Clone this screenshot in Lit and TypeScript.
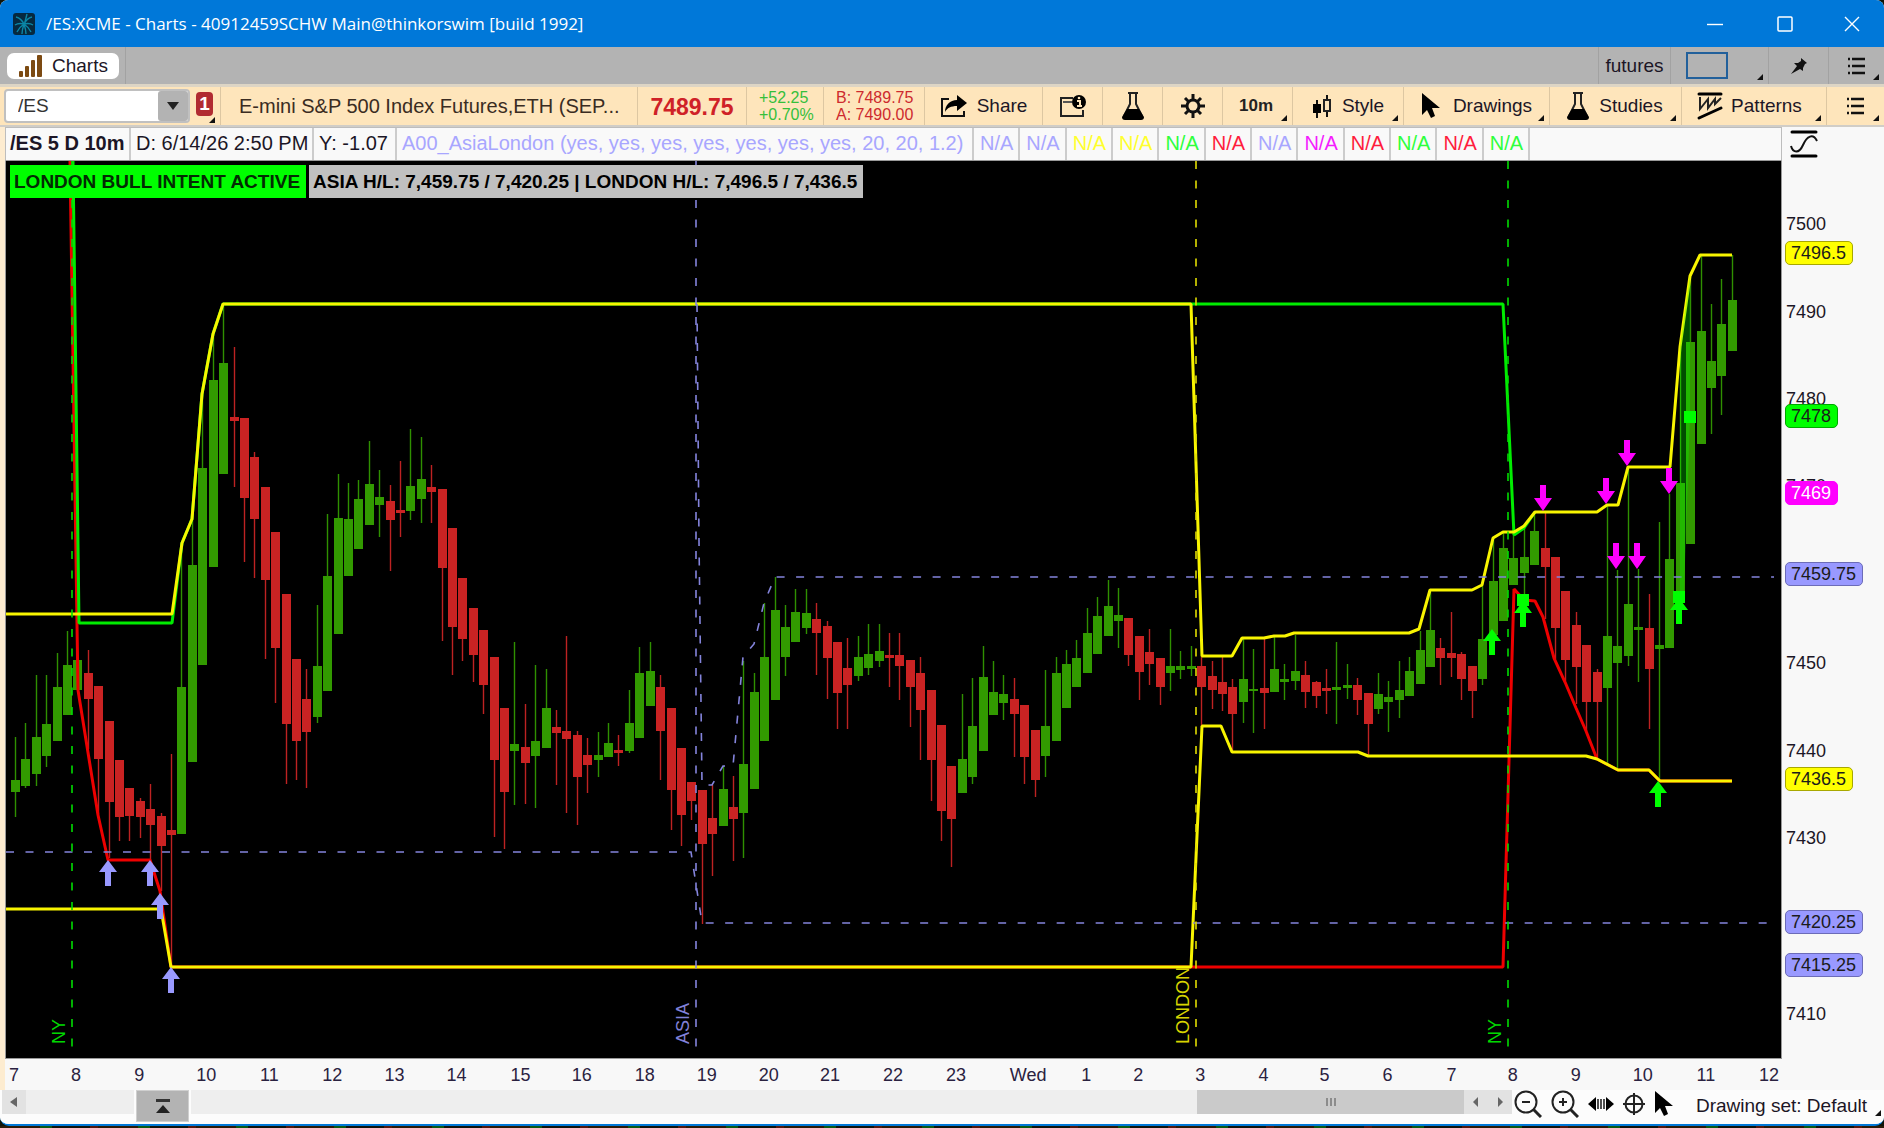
import { LitElement, html, svg, css } from "lit";
import { customElement } from "lit/decorators.js";

/* ---------- chart data (plot units) ---------- */

const PLOT = { x: 5, y: 160, w: 1775, h: 897 };
const FIRST_BAR = 14;
const BAR_STEP = 10.405;

type Bar = [string, number, number, number, number];

// direction, high, body top, body bottom, low
const BARS: Bar[] = [
  ["u", 736, 779, 791, 816], ["u", 722, 758, 785, 787], ["u", 674, 736, 773, 785], ["u", 674, 723, 755, 766],
  ["u", 652, 686, 740, 740], ["u", 630, 664, 714, 714], ["u", 659, 659, 689, 689], ["d", 649, 672, 698, 748],
  ["d", 685, 685, 758, 814], ["d", 720, 720, 801, 857], ["d", 759, 759, 816, 840], ["d", 787, 787, 815, 840],
  ["d", 797, 800, 816, 837], ["d", 783, 808, 824, 859], ["d", 812, 815, 845, 890], ["d", 753, 829, 834, 965],
  ["u", 542, 686, 833, 833], ["u", 518, 564, 761, 761], ["u", 393, 467, 664, 664], ["u", 333, 379, 566, 566],
  ["u", 303, 362, 473, 473], ["d", 346, 416, 420, 486], ["d", 417, 417, 497, 561], ["d", 451, 456, 518, 577],
  ["d", 486, 486, 579, 658], ["d", 531, 531, 647, 702], ["d", 593, 593, 723, 783], ["d", 658, 658, 740, 779],
  ["d", 668, 698, 731, 787], ["u", 604, 665, 716, 722], ["u", 513, 575, 690, 690], ["u", 473, 517, 633, 633],
  ["u", 482, 518, 575, 575], ["u", 479, 498, 548, 548], ["u", 440, 483, 524, 524], ["u", 469, 496, 504, 536],
  ["d", 484, 500, 519, 570], ["d", 460, 509, 512, 536], ["u", 428, 485, 510, 519], ["u", 436, 478, 498, 522],
  ["d", 464, 486, 491, 522], ["d", 488, 488, 567, 640], ["d", 527, 527, 626, 674], ["d", 577, 577, 638, 660],
  ["d", 607, 607, 654, 681], ["d", 629, 629, 684, 713], ["d", 656, 656, 759, 836], ["d", 707, 707, 791, 848],
  ["u", 641, 743, 750, 804], ["d", 703, 746, 762, 803], ["u", 664, 740, 755, 807], ["u", 668, 707, 747, 747],
  ["d", 709, 726, 732, 784], ["d", 635, 730, 738, 812], ["d", 730, 734, 776, 824], ["d", 737, 754, 764, 792],
  ["u", 731, 754, 759, 776], ["u", 722, 742, 756, 756], ["d", 734, 749, 752, 765], ["u", 689, 722, 750, 752],
  ["u", 646, 672, 737, 737], ["u", 641, 670, 705, 705], ["d", 674, 686, 730, 779], ["d", 707, 707, 789, 829],
  ["d", 747, 747, 814, 845], ["d", 781, 781, 800, 819], ["d", 789, 789, 843, 923], ["d", 784, 817, 833, 875],
  ["u", 765, 788, 825, 825], ["d", 775, 806, 818, 860], ["u", 660, 763, 812, 857], ["u", 672, 691, 788, 788],
  ["u", 602, 656, 740, 740], ["u", 576, 609, 699, 699], ["u", 604, 626, 656, 675], ["u", 588, 611, 641, 641],
  ["u", 588, 612, 627, 633], ["d", 602, 618, 632, 674], ["d", 620, 625, 657, 698], ["d", 641, 641, 692, 728],
  ["d", 637, 667, 684, 728], ["u", 635, 656, 675, 680], ["u", 623, 653, 667, 674], ["u", 623, 650, 660, 666],
  ["d", 632, 654, 657, 686], ["d", 632, 654, 665, 699], ["d", 659, 659, 686, 726], ["d", 656, 672, 709, 759],
  ["d", 689, 689, 759, 800], ["d", 724, 724, 810, 840], ["d", 765, 765, 818, 866], ["u", 693, 758, 792, 792],
  ["u", 677, 725, 776, 783], ["u", 645, 676, 750, 750], ["u", 660, 691, 714, 714], ["u", 674, 693, 702, 719],
  ["d", 677, 698, 713, 756], ["d", 704, 704, 756, 783], ["d", 729, 729, 779, 796], ["u", 669, 725, 755, 776],
  ["u", 656, 672, 740, 740], ["u", 649, 663, 707, 707], ["u", 639, 657, 686, 686], ["u", 607, 632, 672, 672],
  ["u", 596, 615, 653, 653], ["u", 579, 605, 635, 635], ["u", 587, 614, 620, 647], ["d", 617, 617, 654, 665],
  ["d", 635, 635, 671, 699], ["d", 628, 651, 663, 684], ["d", 657, 657, 686, 704], ["u", 628, 665, 672, 690],
  ["u", 650, 665, 669, 678], ["u", 645, 665, 668, 675], ["d", 655, 665, 686, 726], ["d", 660, 675, 689, 708],
  ["d", 656, 681, 693, 710], ["d", 678, 686, 713, 750], ["u", 638, 678, 701, 722], ["u", 648, 688, 690, 732],
  ["d", 638, 687, 692, 728], ["u", 636, 668, 691, 691], ["u", 663, 678, 681, 699], ["u", 634, 670, 680, 689],
  ["d", 660, 674, 691, 707], ["d", 680, 681, 695, 707], ["d", 668, 687, 690, 713], ["u", 641, 686, 689, 723],
  ["u", 663, 684, 687, 698], ["d", 677, 684, 699, 714], ["d", 692, 692, 723, 755], ["u", 672, 693, 708, 713],
  ["u", 680, 696, 701, 731], ["u", 660, 689, 699, 717], ["u", 656, 670, 695, 695], ["u", 630, 649, 683, 683],
  ["u", 591, 629, 666, 666], ["d", 637, 647, 657, 684], ["d", 611, 652, 657, 676], ["d", 651, 653, 678, 699],
  ["d", 665, 665, 690, 717], ["u", 583, 638, 678, 684], ["u", 537, 580, 634, 634], ["u", 530, 547, 620, 620],
  ["u", 533, 557, 584, 584], ["u", 525, 556, 572, 594], ["u", 511, 530, 564, 564], ["d", 511, 547, 566, 618],
  ["d", 556, 556, 627, 658], ["d", 590, 590, 659, 680], ["d", 611, 624, 666, 703], ["d", 644, 644, 701, 730],
  ["d", 668, 671, 701, 758], ["u", 504, 635, 687, 763], ["u", 569, 645, 662, 768], ["u", 467, 603, 655, 665],
  ["u", 568, 626, 629, 681], ["d", 593, 627, 668, 728], ["u", 521, 644, 648, 779], ["u", 493, 558, 647, 647],
  ["u", 346, 482, 600, 600], ["u", 273, 341, 543, 543], ["u", 254, 330, 443, 443], ["u", 303, 360, 387, 433],
  ["u", 278, 323, 375, 414], ["u", 254, 299, 350, 350],
];

const CLIMB = "171,613 181,542 191,518 201,393 212,333 222,303";

const LINES = [
  { cls: "red", pts: "69,160 77,689 97,814 107,859 149,859 159,890 170,966 1502,966 1513,588 1523,599 1534,600 1542,616 1553,657 1564,681 1575,707 1585,730 1596,758 1617,769 1648,769 1659,780 1731,780" },
  { cls: "green", pts: "72,160 78,622 171,622 181,542 191,518 201,393 212,333 222,303 1502,303 1513,534 1523,527 1534,511" },
  { cls: "yellow", pts: `5,613 ${CLIMB} 1190,303 1201,655 1231,655 1241,637 1263,637 1273,635 1284,635 1293,632 1408,632 1418,628 1429,589 1471,589 1481,584 1492,537 1502,531 1513,531 1523,525 1534,511 1596,511 1606,504 1617,504 1627,466 1669,466 1679,346 1689,275 1699,254 1731,254` },
  { cls: "yellow", pts: "5,908 160,908 170,966 1190,966 1201,725 1220,725 1231,751 1357,751 1367,755 1585,755 1596,758 1617,769 1648,769 1659,780 1731,780" },
];

const DASHED = [
  { cls: "peri", pts: "5,851 690,851 701,922 1768,922" },
  { cls: "peri", pts: "696,303 698,540 701,784 711,784 722,765 732,765 742,656 753,643 763,602 774,576 1773,576" },
  { cls: "green", pts: "71,160 71,1058" },
  { cls: "peri", pts: "695,160 695,1058" },
  { cls: "yellow", pts: "1195,160 1195,1058" },
  { cls: "green", pts: "1507,160 1507,1058" },
];

const UP_MARKS: [string, number, number][] = [
  ["peri", 107, 859], ["peri", 149, 859], ["peri", 159, 892], ["peri", 170, 966],
  ["green", 1491, 628], ["green", 1522, 600], ["green", 1678, 597], ["green", 1657, 780],
];
const DOWN_MARKS: [number, number][] = [
  [1542, 510], [1605, 503], [1626, 465], [1668, 493], [1615, 568], [1636, 568],
];
const SQUARES: [number, number][] = [[1522, 599], [1678, 596], [1689, 416]];

const SESSIONS = [
  { text: "NY", cls: "green", x: 58 },
  { text: "ASIA", cls: "peri", x: 682 },
  { text: "LONDON", cls: "yellow", x: 1182 },
  { text: "NY", cls: "green", x: 1494 },
];

const HOURS: [string, number][] = [
  ["7", 14], ["8", 76], ["9", 139], ["10", 206], ["11", 269], ["12", 332], ["13", 394], ["14", 456],
  ["15", 520], ["16", 581], ["18", 644], ["19", 706], ["20", 768], ["21", 829], ["22", 892], ["23", 955],
  ["Wed", 1027], ["1", 1085], ["2", 1137], ["3", 1199], ["4", 1262], ["5", 1323], ["6", 1386], ["7", 1450],
  ["8", 1511], ["9", 1574], ["10", 1641], ["11", 1704], ["12", 1767],
];

const PRICES: [string, number][] = [
  ["7500", 223], ["7490", 311], ["7480", 398], ["7470", 485], ["7450", 661], ["7440", 749], ["7430", 836], ["7410", 1012],
];
const BUBBLES: [string, number, string][] = [
  ["7496.5", 252, "yellow"], ["7478", 415, "green"], ["7469", 492, "magenta"], ["7459.75", 573, "peri"],
  ["7436.5", 777, "yellow"], ["7420.25", 920, "peri"], ["7415.25", 963, "peri"],
];

const READINGS = ["peri", "peri", "yellow", "yellow", "green", "red", "peri", "magenta", "red", "green", "red", "green"];

const pctX = (x: number) => `${((x - PLOT.x) / PLOT.w) * 100}%`;
const pctY = (y: number) => `${((y - PLOT.y) / PLOT.h) * 100}%`;

/* ---------- icons ---------- */

const icon = (w: number, h: number, body: unknown) =>
  html`<svg class="icon" width=${w} height=${h} viewBox="0 0 ${w} ${h}" aria-hidden="true">${body}</svg>`;

const appLogo = icon(22, 22, svg`
  <rect x="0" y="0" width="22" height="22" rx="3" fill="#06293f"/>
  <g fill="none" stroke="#0b86a6" stroke-width="1.4">
    <path d="M11 11C9 7 7 5 3 4M11 11C7 10 5 10 2 12M11 11C8 13 6 15 4 19M11 11C10 14 9 17 9 21M11 11C13 7 15 5 19 4M11 11C15 10 17 10 20 12M11 11C14 13 16 15 18 19M11 11C12 14 13 17 13 21"/>
    <path d="M14 1L12 9"/>
  </g>`);

const barsIcon = icon(24, 24, svg`
  <g fill="#7c4a12"><rect x="0" y="17" width="4" height="6" rx="1"/><rect x="6" y="12" width="4" height="11" rx="1"/><rect x="12" y="6" width="4" height="17" rx="1"/><rect x="18" y="1" width="5" height="22" rx="1"/></g>`);

const shareIcon = icon(28, 24, svg`
  <path d="M9 5H2V22H24V17" fill="none" stroke="#111" stroke-width="2"/>
  <path d="M17 1L27 9L17 17V12C11 12 7 14 5 18C5 11 10 6 17 6Z" fill="#000"/>`);

const noteIcon = icon(28, 24, svg`
  <path d="M14 4H2V22H24V16" fill="none" stroke="#222" stroke-width="2"/>
  <path d="M4 8H13" stroke="#555" stroke-width="2"/>
  <circle cx="20" cy="8" r="7" fill="#000"/>
  <path d="M18 7H21V12M18 12H23" fill="none" stroke="#fee5bb" stroke-width="2"/><circle cx="20" cy="4" r="1.3" fill="#fee5bb"/>`);

const flaskIcon = icon(24, 30, svg`
  <path d="M7 2H17M9 2V13L3 25M15 2V13L21 25" fill="none" stroke="#222" stroke-width="2"/>
  <path d="M6 18H18L23 26Q23 29 20 29H4Q1 29 1 26Z" fill="#000"/>`);

const gearIcon = icon(24, 24, svg`
  <g stroke="#111" stroke-width="3"><path d="M12 0V24M0 12H24M4 4L20 20M20 4L4 20"/></g>
  <circle cx="12" cy="12" r="7.5" fill="#111"/><circle cx="12" cy="12" r="4.5" fill="#fee5bb"/>`);

const candleIcon = icon(20, 24, svg`
  <path d="M5 6V24M15 1V23" stroke="#111" stroke-width="2"/>
  <rect x="1" y="10" width="8" height="9" fill="#000"/>
  <rect x="12" y="6" width="6" height="11" fill="#fee5bb" stroke="#222" stroke-width="2"/>`);

const cursorIcon = icon(20, 26, svg`
  <path d="M1 0V22L6 17L10 25L14 23L11 15H19Z" fill="#000"/>`);

const patternIcon = icon(26, 28, svg`
  <path d="M2 2H24M2 26L24 16" stroke="#000" stroke-width="3" stroke-linecap="round"/>
  <path d="M3 5V17L11 7V16L18 7V12L24 6" fill="none" stroke="#222" stroke-width="2"/>`);

const listIcon = icon(19, 18, svg`
  <g stroke="#111" stroke-width="2.6"><path d="M5 2H18M5 9H18M5 16H18M1 2H3M1 9H3M1 16H3"/></g>`);

const pinIcon = icon(18, 18, svg`
  <path d="M11 1L17 6L15 7L13 11L13 14L10 12L1 17L7 9L4 6H8L11 4Z" fill="#111"/>`);

const scaleIcon = icon(28, 28, svg`
  <path d="M2 2H26M2 26H26" stroke="#000" stroke-width="3" stroke-linecap="round"/>
  <path d="M1 16C3 23 9 24 13 15S23 3 27 11" fill="none" stroke="#111" stroke-width="2"/>`);

const magnifier = (plus: boolean) => icon(28, 28, svg`
  <circle cx="12" cy="12" r="10.5" fill="none" stroke="#222" stroke-width="2"/>
  <path d="M19 19L27 27" stroke="#222" stroke-width="3"/>
  <path d="M8 12H16" stroke="#222" stroke-width="2"/>
  ${plus ? svg`<path d="M12 8V16" stroke="#222" stroke-width="2"/>` : ""}`);

const spreadIcon = icon(26, 16, svg`
  <path d="M0 8L8 1V15ZM26 8L18 1V15Z" fill="#000"/><path d="M10 3V13M13 3V13M16 3V13" stroke="#222" stroke-width="1.6"/>`);

const crossIcon = icon(22, 22, svg`
  <circle cx="11" cy="11" r="8.5" fill="none" stroke="#222" stroke-width="2"/><path d="M11 0V22M0 11H22" stroke="#222" stroke-width="2"/>`);

const jumpIcon = icon(16, 18, svg`<rect x="1" y="2" width="14" height="3" fill="#333"/><path d="M8 8L15 16H1Z" fill="#222"/>`);

const tri = (d: string, color = "#666") => icon(8, 10, svg`<path d=${d} fill=${color}/>`);

/* ---------- root ---------- */

@customElement("app-root")
export class AppRoot extends LitElement {
  static styles = css`
    :host {
      display: block;
      height: 100vh;
      min-height: 600px;
      background: #101408;
      font: 19px/24px "Liberation Sans", Arial, sans-serif;
      color: #1c1626;
    }
    * { box-sizing: border-box; }
    button, input {
      font: inherit; color: inherit; background: none; border: 0; padding: 0; margin: 0; border-radius: 0;
    }
    .icon { display: block; flex: none; }
    .page { height: 100%; display: flex; flex-direction: column; }
    .window {
      flex: 1; min-height: 0; display: flex; flex-direction: column; overflow: hidden;
      background: #fbfbfb; border-bottom: 2px solid #0078d7; border-radius: 8px 8px 9px 9px;
    }
    .behind { height: 2px; flex: none; background: repeating-linear-gradient(90deg, #2b1b08 0 40px, #0a5a14 40px 52px, #10140c 52px 90px, #54180e 90px 98px); }

    .title { height: 47px; flex: none; display: flex; align-items: center; background: #0078d9; color: #fff; }
    .title h1 { flex: 1; margin: 0; font: 400 17px/24px "Open Sans", "Noto Sans", sans-serif; white-space: nowrap; }
    .title .logo { padding: 0 11px 0 13px; }
    .winbtn { width: 70px; height: 47px; display: grid; place-items: center; }
    .winbtn.close { width: 64px; }

    .tabs { height: 37px; flex: none; display: flex; align-items: stretch; background: #b3b3b3; }
    .tabwrap { width: 126px; padding: 6px 7px 5px 7px; border-right: 1px solid #a2a2a2; }
    .tab { width: 112px; height: 26px; display: flex; align-items: center; gap: 9px; padding-left: 12px; background: #fff; border-radius: 7px; }
    .space { flex: 1; }
    .tcell { position: relative; border-left: 1px solid #a2a2a2; display: flex; align-items: center; justify-content: center; }
    .w56 { width: 56px; } .w60 { width: 60px; } .w72 { width: 72px; } .w98 { width: 98px; }
    .swatch { width: 42px; height: 27px; border: 2px solid #22609b; margin-right: 26px; }
    .corner::after {
      content: ""; position: absolute; right: 5px; bottom: 4px;
      border-style: solid; border-width: 0 0 6px 6px; border-color: transparent transparent #111 transparent;
    }

    .tools {
      height: 43px; flex: none; display: flex; align-items: stretch; background: #fee5bb;
      border-top: 3px solid #ddd5c5; border-bottom: 2px solid #d0cdc7; white-space: nowrap;
    }
    .symbol { width: 220px; display: flex; align-items: center; padding-left: 4px; }
    .combo { width: 186px; height: 34px; display: flex; align-items: stretch; background: #fff; border: 2px solid #c0c0c0; border-radius: 4px; }
    .combo input { flex: 1; min-width: 0; padding-left: 12px; color: #333; outline: 0; }
    .combo button { width: 30px; background: #b3b3b3; border-radius: 3px; display: grid; place-items: center; }
    .badge { position: relative; width: 17px; height: 24px; margin: 0 0 4px 6px; background: #b12b31; color: #fff; font-weight: 700; border-radius: 4px; }
    .badge::after { content: ""; position: absolute; right: -2px; bottom: -7px; border-style: solid; border-width: 0 0 6px 6px; border-color: transparent transparent #111 transparent; }
    .cell { position: relative; border-left: 1px solid #ddc7a2; display: flex; align-items: center; justify-content: center; }
    .name { flex: 1; min-width: 0; justify-content: flex-start; padding-left: 18px; color: #3a2c22; font-size: 20px; overflow: hidden; }
    .last { width: 109px; font-size: 23px; font-weight: 700; color: #cf2127; padding-top: 2px; }
    .pair { font-size: 16px; line-height: 17px; justify-content: flex-start; padding-left: 12px; }
    .w77 { width: 77px; color: #35bf3b; } .w101 { width: 101px; color: #cd2a2e; }
    .share { width: 118px; gap: 9px; }
    .ten { width: 70px; font-size: 17px; font-weight: 700; color: #222; padding-right: 3px; }
    .style { width: 111px; gap: 10px; }
    .drawings { width: 146px; gap: 12px; padding-right: 0; }
    .studies { width: 132px; gap: 9px; padding-right: 2px; }
    .patterns { width: 145px; gap: 8px; padding-right: 9px; }
    .w58 { width: 58px; }

    .main { flex: 1; min-height: 0; display: grid; grid-template-columns: minmax(0, 1fr) 102px; background: #f8f8f8; border-left: 5px solid #fdecd0; }
    .plotcol { min-width: 0; display: flex; flex-direction: column; }
    .data { height: 34px; flex: none; display: flex; font-size: 20px; line-height: 30px; white-space: nowrap; border: 1px solid #bdbdbd; border-bottom-color: #999; background: #f9f9f9; overflow: hidden; }
    .data span { border-right: 2px solid #ccc; padding: 0 5px 0 6px; flex: none; }
    .data .sym { width: 125px; padding: 0 0 0 4px; font-weight: 700; }
    .data .date { width: 183px; padding: 0 0 0 5px; } .data .yv { width: 83px; padding: 0 5px; } .data .study { width: 577px; padding: 0 5px; }
    .data .peri { color: #a8a6ff; } .data .yellow { color: #ffff2e; } .data .green { color: #2eff3c; }
    .data .red { color: #ff1c3c; } .data .magenta { color: #f41cff; }

    .plot { position: relative; flex: 1; min-height: 0; background: #000; border: 1px solid #999; border-width: 0 1px 1px 1px; overflow: hidden; }
    .plot > svg { display: block; width: 100%; height: 100%; }
    .up { fill: #329a00; } .down { fill: #ca2323; }
    .upw { stroke: #2f9000; stroke-width: 1.4; } .downw { stroke: #bd2222; stroke-width: 1.4; }
    polyline { fill: none; }
    .solid.yellow { stroke: #f8f400; } .solid.green { stroke: #00ec00; } .solid.red { stroke: #ee0000; }
    .solid { stroke-width: 3; stroke-linejoin: bevel; }
    .dash { stroke-width: 1.6; stroke-dasharray: 8 11.5; }
    .dash.peri { stroke: #8484dc; } .dash.green { stroke: #00dd00; } .dash.yellow { stroke: #e0dc00; }
    .mark.peri { fill: #9999ff; } .mark.green { fill: #00ff00; } .mark.magenta { fill: #ff00ff; }
    .cloud { fill: #00ff00; opacity: 0.3; }
    .notes { position: absolute; left: 4px; top: 4px; display: flex; gap: 3px; font-weight: 700; line-height: 32px; color: #000; white-space: nowrap; }
    .notes span { padding: 1px 6px 0 4px; background: #c0c0c0; }
    .notes .bull { background: #00ff00; color: #032b03; }
    .session { position: absolute; bottom: 14px; font-size: 18px; line-height: 20px; writing-mode: vertical-rl; transform: translateX(-50%) rotate(180deg); }
    .session.green { color: #00d800; } .session.peri { color: #8080d8; } .session.yellow { color: #d8d400; }

    .axis { position: relative; height: 32px; flex: none; font-size: 18px; line-height: 33px; }
    .axis span { position: absolute; transform: translateX(-50%); color: #2a2240; }
    .side { display: flex; flex-direction: column; }
    .scale { height: 34px; padding: 0 0 0 8px; flex: none; }
    .prices { position: relative; flex: 1; margin-bottom: 32px; font-size: 18px; line-height: 22px; }
    .prices span { position: absolute; left: 4px; transform: translateY(-50%); }
    .prices .tag { left: 3px; padding: 0 6px 0 5px; border: 1px solid; border-radius: 5px; color: #1b1b1b; }
    .tag.yellow { background: #ffff00; border-color: #a8a800; } .tag.green { background: #00ff00; border-color: #00a800; }
    .prices .tag.magenta { background: #ff00ff; border-color: #ff00ff; color: #fff; } .tag.peri { background: #9999ff; border-color: #6c6cb8; }

    .foot { height: 34px; flex: none; display: flex; align-items: flex-start; background: #fcfcfc; }
    .scroll { flex: 1; min-width: 0; height: 24px; display: flex; margin-left: 2px; }
    .arrow { width: 24px; height: 24px; background: #e2e2e2; display: grid; place-items: center; flex: none; }
    .track { background: #eeeeee; height: 24px; }
    .t1 { width: 108px; margin-right: 2px; flex: none; } .t2 { flex: 1; margin-left: 2px; }
    .jump { width: 53px; height: 32px; background: #b3b3b3; border: 1px solid #cfcfcf; display: grid; place-items: center; flex: none; }
    .thumb { width: 267px; height: 24px; background: #cacaca; display: flex; align-items: center; justify-content: center; gap: 2px; flex: none; }
    .thumb i { width: 2px; height: 8px; background: #8c8c8c; }
    .view { display: flex; align-items: center; height: 28px; width: 162px; padding-left: 2px; justify-content: space-between; }
    .view button { display: grid; place-items: center; }
    .set { position: relative; width: 210px; height: 32px; padding-left: 22px; text-align: left; line-height: 30px; white-space: nowrap; }
    .set::after { right: 3px; bottom: 6px; }
  `;

  private bar([dir, hi, top, bot, lo]: Bar, i: number) {
    const x = Math.round(FIRST_BAR + i * BAR_STEP);
    const cls = dir === "u" ? "up" : "down";
    return svg`
      <line class="${cls}w" x1=${x + 0.5} x2=${x + 0.5} y1=${hi} y2=${lo}></line>
      <rect class=${cls} x=${x - 4} y=${top} width="9" height=${bot - top}></rect>`;
  }

  private chart() {
    return html`
      <svg viewBox="${PLOT.x} ${PLOT.y} ${PLOT.w} ${PLOT.h}" preserveAspectRatio="none" role="img" aria-label="/ES 10 minute candles">
        ${BARS.map((b, i) => this.bar(b, i))}
        ${LINES.map((l) => svg`<polyline class="solid ${l.cls}" points=${l.pts}></polyline>`)}
        ${DASHED.map((l) => svg`<polyline class="dash ${l.cls}" points=${l.pts}></polyline>`)}
        <polygon class="cloud" points="1679,346 1689,275 1689,416 1683,590 1679,600"></polygon>
        ${UP_MARKS.map(([c, x, y]) => svg`<path class="mark ${c}" d="M${x} ${y}l9 12h-6v14h-6v-14h-6z"></path>`)}
        ${DOWN_MARKS.map(([x, y]) => svg`<path class="mark magenta" d="M${x} ${y}l9 -13h-6v-13h-6v13h-6z"></path>`)}
        ${SQUARES.map(([x, y]) => svg`<rect class="mark green" x=${x - 6} y=${y - 6} width="12" height="12"></rect>`)}
      </svg>
      <div class="notes">
        <span class="bull">LONDON BULL INTENT ACTIVE</span>
        <span>ASIA H/L: 7,459.75 / 7,420.25 | LONDON H/L: 7,496.5 / 7,436.5</span>
      </div>
      ${SESSIONS.map((s) => html`<span class="session ${s.cls}" style="left:${pctX(s.x)}">${s.text}</span>`)}`;
  }

  render() {
    return html`
      <div class="page">
        <div class="window">
          <header class="title">
            <span class="logo">${appLogo}</span>
            <h1>/ES:XCME - Charts - 40912459SCHW Main@thinkorswim [build 1992]</h1>
            <button class="winbtn" aria-label="Minimize">${icon(16, 16, svg`<path d="M0 8.5H16" stroke="#fff" stroke-width="1.4"/>`)}</button>
            <button class="winbtn" aria-label="Maximize">${icon(16, 16, svg`<rect x="1" y="1" width="14" height="14" rx="1" fill="none" stroke="#fff" stroke-width="1.5"/>`)}</button>
            <button class="winbtn close" aria-label="Close">${icon(16, 16, svg`<path d="M1 1L15 15M15 1L1 15" stroke="#fff" stroke-width="1.4"/>`)}</button>
          </header>

          <nav class="tabs">
            <div class="tabwrap"><button class="tab">${barsIcon}Charts</button></div>
            <div class="space"></div>
            <button class="tcell w72">futures</button>
            <button class="tcell w98 corner" aria-label="Symbol link color"><span class="swatch"></span></button>
            <button class="tcell w60" aria-label="Pin">${pinIcon}</button>
            <button class="tcell w56 corner" aria-label="Tab menu">${listIcon}</button>
          </nav>

          <div class="tools">
            <div class="symbol">
              <div class="combo">
                <input aria-label="Symbol" .value=${"/ES"} />
                <button aria-label="Recent symbols">${icon(12, 8, svg`<path d="M0 0H12L6 8Z" fill="#222"/>`)}</button>
              </div>
              <button class="badge" aria-label="Link group 1">1</button>
            </div>
            <div class="cell name">E-mini S&amp;P 500 Index Futures,ETH (SEP...</div>
            <div class="cell last">7489.75</div>
            <div class="cell pair w77"><div>+52.25<br />+0.70%</div></div>
            <div class="cell pair w101"><div>B: 7489.75<br />A: 7490.00</div></div>
            <button class="cell share">${shareIcon}Share</button>
            <button class="cell w60" aria-label="Notes">${noteIcon}</button>
            <button class="cell w60" aria-label="Edit studies">${flaskIcon}</button>
            <button class="cell w60" aria-label="Settings">${gearIcon}</button>
            <button class="cell ten corner">10m</button>
            <button class="cell style corner">${candleIcon}Style</button>
            <button class="cell drawings corner">${cursorIcon}Drawings</button>
            <button class="cell studies corner">${flaskIcon}Studies</button>
            <button class="cell patterns corner">${patternIcon}Patterns</button>
            <button class="cell w58 corner" aria-label="Chart menu">${listIcon}</button>
          </div>

          <main class="main">
            <div class="plotcol">
              <div class="data">
                <span class="sym">/ES 5 D 10m</span>
                <span class="date">D: 6/14/26 2:50 PM</span>
                <span class="yv">Y: -1.07</span>
                <span class="study peri">A00_AsiaLondon (yes, yes, yes, yes, yes, yes, yes, 20, 20, 1.2)</span>
                ${READINGS.map((c) => html`<span class=${c}>N/A</span>`)}
              </div>
              <div class="plot">${this.chart()}</div>
              <div class="axis">${HOURS.map(([t, x]) => html`<span style="left:${pctX(x)}">${t}</span>`)}</div>
            </div>
            <aside class="side">
              <button class="scale" aria-label="Price scale">${scaleIcon}</button>
              <div class="prices">
                ${PRICES.map(([t, y]) => html`<span style="top:${pctY(y)}">${t}</span>`)}
                ${BUBBLES.map(([t, y, c]) => html`<span class="tag ${c}" style="top:${pctY(y)}">${t}</span>`)}
              </div>
            </aside>
          </main>

          <footer class="foot">
            <div class="scroll">
              <button class="arrow" aria-label="Scroll to start">${tri("M7 0V10L0 5Z")}</button>
              <div class="track t1"></div>
              <button class="jump" aria-label="Show lower panel">${jumpIcon}</button>
              <div class="track t2"></div>
              <div class="thumb"><i></i><i></i><i></i></div>
              <button class="arrow" aria-label="Scroll left">${tri("M6 0V10L1 5Z")}</button>
              <button class="arrow" aria-label="Scroll right">${tri("M2 0V10L7 5Z")}</button>
            </div>
            <div class="view">
              <button aria-label="Zoom out">${magnifier(false)}</button>
              <button aria-label="Zoom in">${magnifier(true)}</button>
              <button aria-label="Pan">${spreadIcon}</button>
              <button aria-label="Crosshair">${crossIcon}</button>
              <button aria-label="Pointer">${cursorIcon}</button>
            </div>
            <button class="set corner">Drawing set: Default</button>
          </footer>
        </div>
        <div class="behind"></div>
      </div>`;
  }
}
